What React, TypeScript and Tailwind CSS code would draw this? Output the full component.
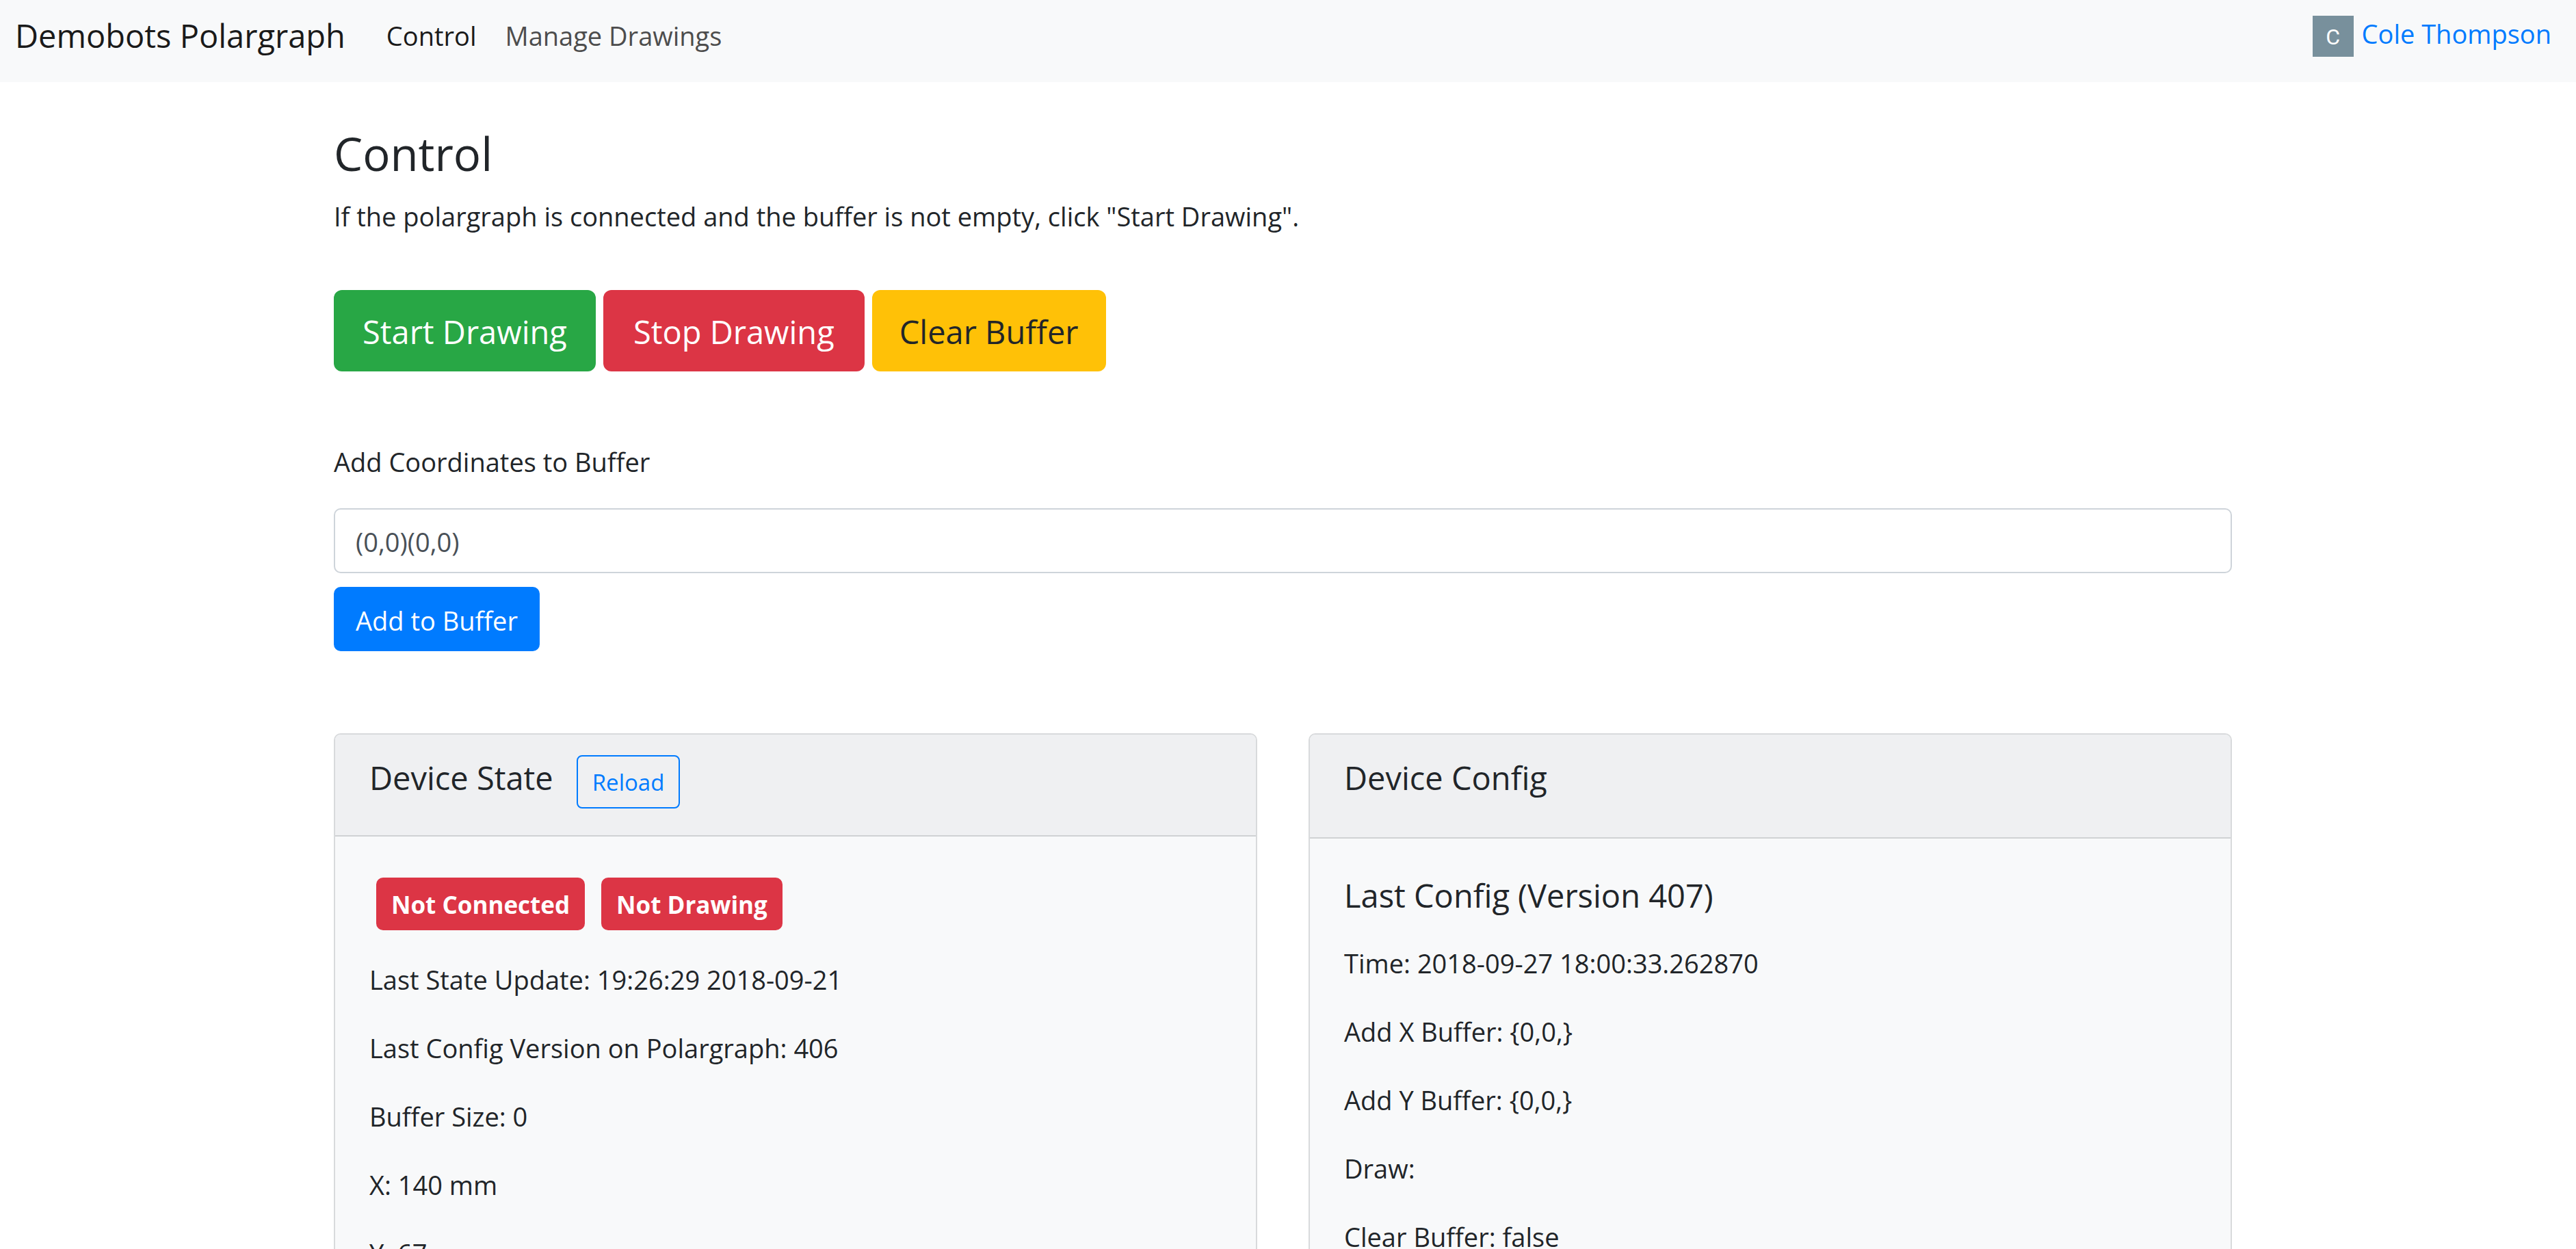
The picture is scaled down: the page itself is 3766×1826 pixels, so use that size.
import React, { useState } from "react";

const stateLines = [
  "Last State Update: 19:26:29 2018-09-21",
  "Last Config Version on Polargraph: 406",
  "Buffer Size: 0",
  "X: 140 mm",
  "Y: 67",
];

const configLines = [
  "Time: 2018-09-27 18:00:33.262870",
  "Add X Buffer: {0,0,}",
  "Add Y Buffer: {0,0,}",
  "Draw:",
  "Clear Buffer: false",
];

function Lines({ items }: { items: string[] }) {
  return (
    <div className="flex flex-col gap-10">
      {items.map((line) => (
        <p key={line}>{line}</p>
      ))}
    </div>
  );
}

function Badge({ children }: { children: React.ReactNode }) {
  return (
    <span className="rounded-[10px] bg-[#dc3545] px-[22px] pt-0.5 text-[35px] font-bold leading-[75px] text-white">
      {children}
    </span>
  );
}

const card = "min-w-0 flex-1 rounded-[10px] border-2 border-[#d8dadc] bg-[#f8f9fa]";
const cardHeader = "rounded-t-[8px] border-b-2 border-[#d0d2d4] bg-[#eff0f2] px-[50px]";

export default function App() {
  const [coords, setCoords] = useState("(0,0)(0,0)");
  return (
    <div className="h-screen overflow-hidden bg-white font-['Open_Sans','Noto_Sans',sans-serif] text-[38px] leading-[60px] text-[#212529]">
      <header className="flex items-center bg-[#f8f9fa] px-[22px] pb-4">
        <a href="#" className="text-[47px] leading-[104px] text-[#1a1a1a]">
          Demobots Polargraph
        </a>
        <nav className="ml-[60px] flex gap-[42px]">
          <a href="#control" className="text-[#1a1a1a]">Control</a>
          <a href="#drawings" className="text-[#4d4d4d]">Manage Drawings</a>
        </nav>
        <a href="#account" className="mb-0.5 ml-auto mr-[14px] text-[#007bff]">
          <span className="mr-3 inline-block size-[60px] bg-[#78909c] text-center align-middle font-[Roboto,sans-serif] text-[32px] leading-[62px] text-white">
            C
          </span>
          Cole Thompson
        </a>
      </header>

      <main className="mx-auto max-w-[2790px] pr-[15px]">
        <h1 className="pt-[62px] text-[67px] leading-[84px]">Control</h1>
        <p className="mt-5">
          If the polargraph is connected and the buffer is not empty, click "Start Drawing".
        </p>

        <div className="mt-[78px] flex gap-[11px] text-[47px] leading-[115px]">
          <button className="rounded-[12px] bg-[#28a745] px-[42px] pt-1 text-white">Start Drawing</button>
          <button className="rounded-[12px] bg-[#dc3545] px-[44px] pt-1 text-white">Stop Drawing</button>
          <button className="rounded-[12px] bg-[#ffc107] px-[40px] pt-1">Clear Buffer</button>
        </div>

        <form className="mt-[102px] flex flex-col items-start" onSubmit={(e) => e.preventDefault()}>
          <label htmlFor="coords">Add Coordinates to Buffer</label>
          <input
            id="coords"
            type="text"
            value={coords}
            onChange={(e) => setCoords(e.target.value)}
            className="mt-[38px] h-[95px] w-full rounded-[10px] border-2 border-[#ced4da] bg-white px-[30px] pt-0.5 text-[#495057]"
          />
          <button className="mt-5 rounded-[10px] bg-[#007bff] px-[32px] pt-1 leading-[90px] text-white">
            Add to Buffer
          </button>
        </form>

        <div className="mt-[120px] flex items-start gap-[75px]">
          <section className={card}>
            <div className={cardHeader + " flex items-start gap-[34px] pb-[39px] pt-[30px]"}>
              <h2 className="text-[47px] leading-[66px]">Device State</h2>
              <button className="rounded-[8px] border-2 border-[#007bff] px-[21px] pt-0.5 text-[33px] leading-[72px] text-[#007bff]">
                Reload
              </button>
            </div>
            <div className="px-[50px] pb-12 pt-[60px]">
              <div className="mb-[42px] ml-[10px] flex gap-6">
                <Badge>Not Connected</Badge>
                <Badge>Not Drawing</Badge>
              </div>
              <Lines items={stateLines} />
            </div>
          </section>

          <section className={card}>
            <div className={cardHeader + " pb-[54px] pt-[30px]"}>
              <h2 className="text-[47px] leading-[66px]">Device Config</h2>
            </div>
            <div className="px-[50px] pb-12 pt-[50px]">
              <h3 className="mb-[36px] text-[47px] leading-[66px]">Last Config (Version 407)</h3>
              <Lines items={configLines} />
            </div>
          </section>
        </div>
      </main>
    </div>
  );
}
